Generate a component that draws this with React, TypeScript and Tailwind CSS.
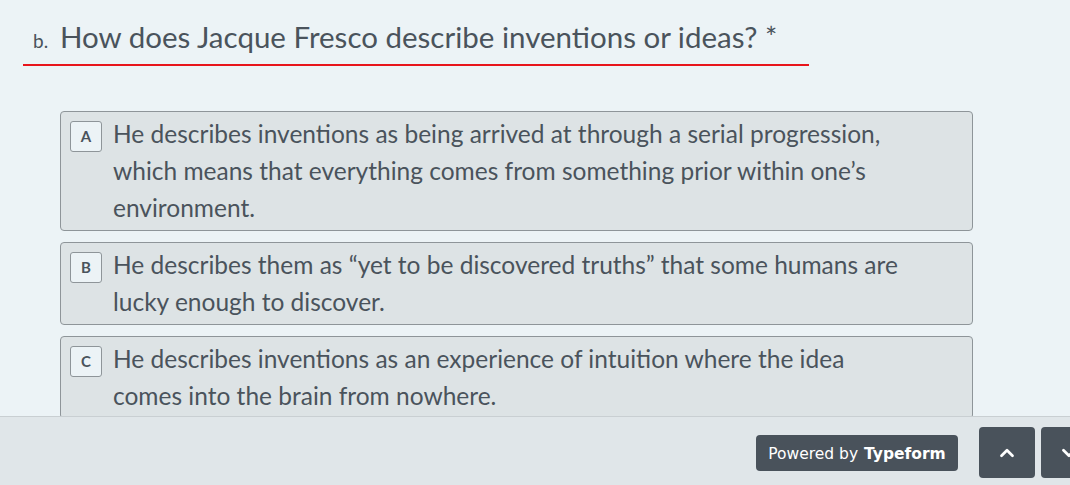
import { ChevronUp, ChevronDown } from 'lucide-react';

const choices = [
  {
    key: 'A',
    lines: [
      'He describes inventions as being arrived at through a serial progression,',
      'which means that everything comes from something prior within one\u2019s',
      'environment.',
    ],
  },
  {
    key: 'B',
    lines: [
      'He describes them as \u201cyet to be discovered truths\u201d that some humans are',
      'lucky enough to discover.',
    ],
  },
  {
    key: 'C',
    lines: [
      'He describes inventions as an experience of intuition where the idea',
      'comes into the brain from nowhere.',
    ],
  },
];

export default function App() {
  return (
    <div
      className="relative h-[485px] w-[1070px] overflow-hidden bg-[#ecf3f6] text-[#4a535c]"
      style={{ fontFamily: 'Lato, "Liberation Sans", sans-serif' }}
    >
      <div className="pl-[23px] pt-[18px]">
        <div className="w-[786px] border-b-2 border-[#e8141b] pb-[8px]">
          <div className="flex items-baseline">
            <span className="w-[37px] pl-[10px] text-[19px]">b.</span>
            <h1 className="text-[29.5px] leading-[38px]">
              How does Jacque Fresco describe inventions or ideas?{' '}
              <span className="text-[29px]">*</span>
            </h1>
          </div>
        </div>
      </div>

      <div className="ml-[60px] mt-[45px] flex w-[913px] flex-col gap-[11px]">
        {choices.map((c) => (
          <div
            key={c.key}
            className="flex rounded-[4px] border border-[#8e9599] bg-[#dde3e5] pb-[4px] pl-[9px] pr-[40px] pt-[3px]"
          >
            <div className="mr-[11px] mt-[6px] flex h-[31px] w-[32px] shrink-0 items-center justify-center rounded-[3px] border border-[#8e9599] bg-[#ecf3f6] text-[15px] font-bold">
              {c.key}
            </div>
            <p className="whitespace-nowrap text-[24.5px] leading-[37px]">
              {c.lines.map((l, i) => (
                <span key={i} className="block">
                  {l}
                </span>
              ))}
            </p>
          </div>
        ))}
      </div>

      <div className="absolute bottom-0 left-0 flex h-[69px] w-full items-start justify-end border-t border-[#c9cfd2] bg-[#e0e6e9]">
        <div
          className="mr-[21px] mt-[18px] flex h-[36px] w-[202px] items-center justify-center rounded-[4px] bg-[#49525b] pt-[3px] text-white"
          style={{ fontFamily: '"DejaVu Sans", sans-serif' }}
        >
          <span className="text-[15.5px]">Powered by</span>
          <span className="ml-[6px] text-[15.5px] font-bold">Typeform</span>
        </div>
        <div className="mr-[6px] mt-[10px] flex h-[51px] w-[56px] items-center justify-center rounded-[4px] bg-[#49525b] text-white">
          <ChevronUp size={22} strokeWidth={3} />
        </div>
        <div className="mr-[-27px] mt-[10px] flex h-[51px] w-[56px] items-center justify-center rounded-[4px] bg-[#49525b] text-white">
          <ChevronDown size={22} strokeWidth={3} />
        </div>
      </div>
    </div>
  );
}
